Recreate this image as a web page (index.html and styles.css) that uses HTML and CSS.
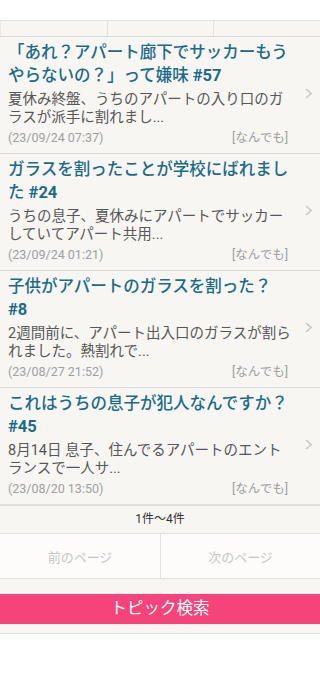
FILE: index.html
```html
<!DOCTYPE html>
<html lang="ja">
<head>
<meta charset="utf-8">
<meta name="viewport" content="width=device-width, initial-scale=1">
<link rel="stylesheet" href="styles.css">
</head>
<body>
<div class="top-space"></div>
<div class="tabs">
  <div class="tab"></div>
  <div class="tab"></div>
  <div class="tab"></div>
</div>
<ul class="list">
  <li class="item">
    <div class="body">
      <div class="title">「あれ？アパート廊下でサッカーもうやらないの？」って嫌味 <b>#57</b></div>
      <div class="desc">夏休み終盤、うちのアパートの入り口のガラスが派手に割れまし...</div>
      <div class="meta"><span>(23/09/24 07:37)</span><span>[なんでも]</span></div>
    </div>
    <svg class="chev" viewBox="0 0 7 11" width="7" height="11"><polyline points="1,1 6,5.5 1,10" fill="none" stroke="#c9c9c9" stroke-width="1.6"/></svg>
  </li>
  <li class="item">
    <div class="body">
      <div class="title">ガラスを割ったことが学校にばれました <b>#24</b></div>
      <div class="desc">うちの息子、夏休みにアパートでサッカーしていてアパート共用...</div>
      <div class="meta"><span>(23/09/24 01:21)</span><span>[なんでも]</span></div>
    </div>
    <svg class="chev" viewBox="0 0 7 11" width="7" height="11"><polyline points="1,1 6,5.5 1,10" fill="none" stroke="#c9c9c9" stroke-width="1.6"/></svg>
  </li>
  <li class="item">
    <div class="body">
      <div class="title">子供がアパートのガラスを割った？ <b>#8</b></div>
      <div class="desc">2週間前に、アパート出入口のガラスが割られました。熱割れで...</div>
      <div class="meta"><span>(23/08/27 21:52)</span><span>[なんでも]</span></div>
    </div>
    <svg class="chev" viewBox="0 0 7 11" width="7" height="11"><polyline points="1,1 6,5.5 1,10" fill="none" stroke="#c9c9c9" stroke-width="1.6"/></svg>
  </li>
  <li class="item">
    <div class="body">
      <div class="title">これはうちの息子が犯人なんですか？ <b>#45</b></div>
      <div class="desc">8月14日 息子、住んでるアパートのエントランスで一人サ...</div>
      <div class="meta"><span>(23/08/20 13:50)</span><span>[なんでも]</span></div>
    </div>
    <svg class="chev" viewBox="0 0 7 11" width="7" height="11"><polyline points="1,1 6,5.5 1,10" fill="none" stroke="#c9c9c9" stroke-width="1.6"/></svg>
  </li>
</ul>
<div class="count">1件〜4件</div>
<div class="pager">
  <div class="pbtn">前のページ</div>
  <div class="pbtn">次のページ</div>
</div>
<div class="search-wrap">
  <div class="search">トピック検索</div>
</div>
</body>
</html>
```
FILE: styles.css
```css
html, body {
  margin: 0;
  padding: 0;
  background: #ffffff;
  font-family: Roboto, "Noto Sans CJK JP", sans-serif;
}
.top-space {
  height: 20px;
  background: #ffffff;
}
.tabs {
  display: grid;
  grid-template-columns: 107px 106px 107px;
  height: 15px;
  border-top: 1px solid #e2e0dc;
  border-bottom: 1px solid #dcdad6;
  background: #f7f6f3;
}
.tab {
  border-left: 1px solid #e2e0dc;
}
.tab:first-child {
  border-left: 1px solid #ebe9e5;
}
.list {
  list-style: none;
  margin: 0;
  padding: 0;
}
.item {
  display: flex;
  align-items: center;
  padding: 4px 8px 7px 8px;
  background: #f7f6f3;
  border-bottom: 1px solid #dcdad6;
}
.item:last-child {
  border-bottom: 2px solid #e0deda;
}
.body {
  flex: 1;
  min-width: 0;
}
.title {
  font-size: 16.5px;
  line-height: 23px;
  color: #1b6a8a;
  font-weight: 500;
}
.title b {
  font-family: Roboto, sans-serif;
  font-weight: 700;
}
.desc {
  margin-top: 4px;
  font-size: 14.5px;
  line-height: 18px;
  color: #575757;
}
.meta {
  margin-top: 2px;
  display: flex;
  justify-content: space-between;
  padding-right: 6px;
  font-size: 12.5px;
  line-height: 17px;
  color: #a0a0a0;
}
.chev {
  flex: none;
  margin-left: 11px;
}
.count {
  height: 27px;
  line-height: 27px;
  text-align: center;
  font-size: 12px;
  color: #333333;
  background: #f7f6f3;
  border-bottom: 1px solid #e2e0dc;
}
.pager {
  display: grid;
  grid-template-columns: 1fr 1fr;
  height: 44px;
  background: #fdfcfb;
  border-bottom: 1px solid #e2e0dc;
}
.pbtn {
  display: flex;
  align-items: center;
  justify-content: center;
  font-size: 13px;
  color: #c6c6c6;
}
.pbtn + .pbtn {
  border-left: 1px solid #e6e4e0;
}
.search-wrap {
  background: #f7f6f3;
  padding: 14px 0 9px 0;
  border-bottom: 1px solid #e2e0dc;
}
.search {
  height: 30px;
  line-height: 30px;
  background: #f5447a;
  border-top: 1px solid #f0eeea;
  color: #ffffff;
  text-align: center;
  font-size: 16.5px;
}
```
